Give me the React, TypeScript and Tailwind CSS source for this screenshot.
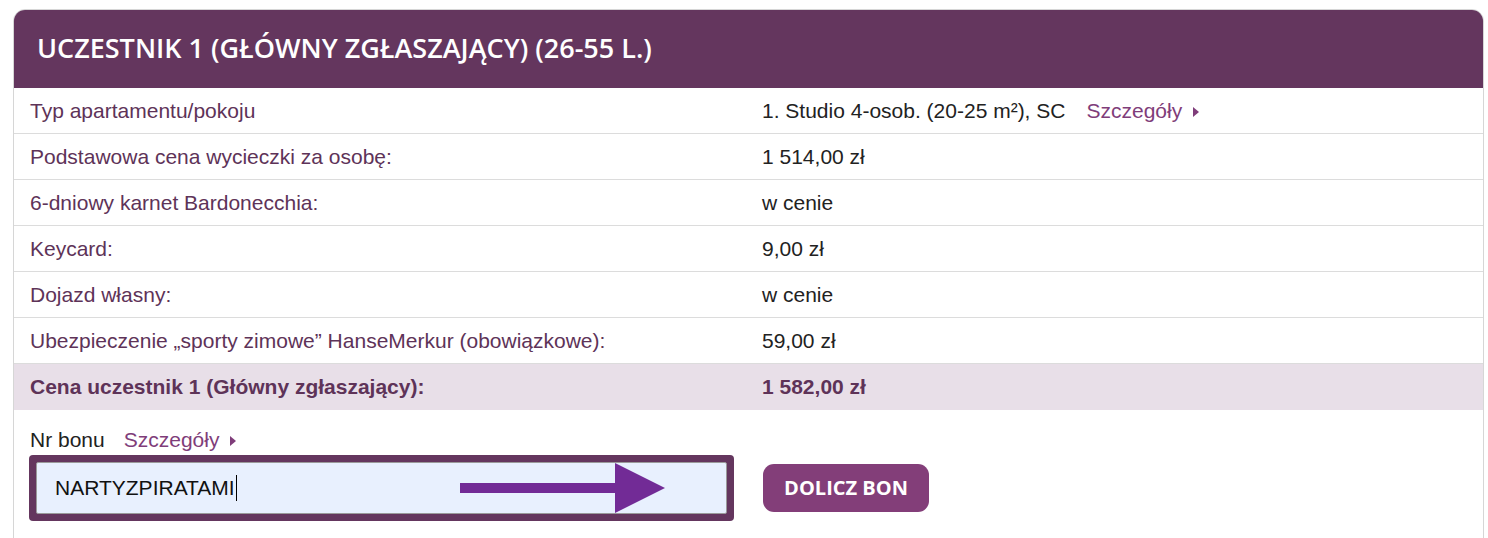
import React from "react";

const rows: { label: string; value: React.ReactNode }[] = [
  {
    label: "Typ apartamentu/pokoju",
    value: (
      <span className="flex items-center">
        <span>1. Studio 4-osob. (20-25 m²), SC</span>
        <DetailsLink className="ml-[21px]" />
      </span>
    ),
  },
  { label: "Podstawowa cena wycieczki za osobę:", value: "1 514,00 zł" },
  { label: "6-dniowy karnet Bardonecchia:", value: "w cenie" },
  { label: "Keycard:", value: "9,00 zł" },
  { label: "Dojazd własny:", value: "w cenie" },
  {
    label: "Ubezpieczenie „sporty zimowe” HanseMerkur (obowiązkowe):",
    value: "59,00 zł",
  },
];

function DetailsLink({ className = "" }: { className?: string }) {
  return (
    <span className={`flex items-center text-[#7f3d7a] ${className}`}>
      Szczegóły
      <svg width="6" height="10" viewBox="0 0 6 10" className="ml-[11px] mt-[2px]">
        <path d="M0 0 L6 5 L0 10 Z" fill="#7f3d7a" />
      </svg>
    </span>
  );
}

export default function App() {
  return (
    <div
      className="w-[1488px] h-[538px] bg-white pt-[9px] pl-[13px] overflow-hidden"
      style={{ fontFamily: '"Liberation Sans", Arial, sans-serif' }}
    >
      <div className="w-[1471px] h-[600px] border border-[#d6d6d6] rounded-t-[12px] overflow-hidden">
        {/* header */}
        <div className="h-[78px] bg-[#64365e] flex items-center pl-[23px] pb-[2px]">
          <h1
            className="text-white text-[27px] font-semibold"
            style={{ fontFamily: '"Open Sans", sans-serif' }}
          >
            UCZESTNIK 1 (GŁÓWNY ZGŁASZAJĄCY) (26-55 L.)
          </h1>
        </div>

        {/* rows */}
        {rows.map((r) => (
          <div
            key={r.label}
            className="h-[46px] grid grid-cols-[732px_1fr] items-center border-b border-[#dcdcdc] text-[21px]"
          >
            <div className="pl-[16px] text-[#5e3358]">{r.label}</div>
            <div className="pl-[16px] text-[#222]">{r.value}</div>
          </div>
        ))}

        {/* total */}
        <div className="h-[46px] grid grid-cols-[732px_1fr] items-center bg-[#e8dfe8] text-[21px] font-bold">
          <div className="pl-[16px] text-[#5e3358]">Cena uczestnik 1 (Główny zgłaszający):</div>
          <div className="pl-[16px] text-[#5e3358]">1 582,00 zł</div>
        </div>

        {/* voucher */}
        <div className="pl-[16px] pt-[18px] text-[21px]">
          <div className="flex items-center h-[24px] text-[#222]">
            Nr bonu
            <DetailsLink className="ml-[19px]" />
          </div>
          <div className="flex items-center mt-[3px] -ml-px">
            <div className="relative w-[705px] h-[66px] rounded-[4px] bg-[#64365e] p-[7px]">
              <div className="w-full h-full bg-[#e8f0fe] border border-[#9a9a9a] rounded-[2px] flex items-center pl-[18px] text-[#111]">
                <span>NARTYZPIRATAMI</span>
                <span className="w-px h-[26px] bg-black ml-px" />
              </div>
              <svg
                className="absolute left-[431px] top-[8px]"
                width="207"
                height="51"
                viewBox="0 0 207 51"
              >
                <rect x="0" y="20" width="158" height="10" fill="#722b96" />
                <path d="M155 0 L205 25 L155 50 Z" fill="#722b96" />
              </svg>
            </div>
            <button
              className="ml-[29px] h-[48px] w-[166px] rounded-[11px] bg-[#833e79] text-white text-[20px] font-bold"
              style={{ fontFamily: '"Open Sans", sans-serif' }}
            >
              DOLICZ BON
            </button>
          </div>
        </div>
      </div>
    </div>
  );
}
